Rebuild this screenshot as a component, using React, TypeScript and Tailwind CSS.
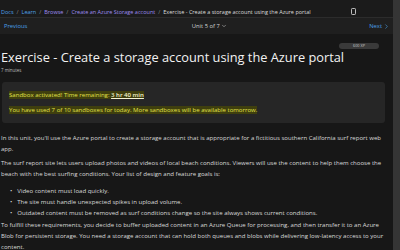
import { ChevronDown, ChevronRight } from "lucide-react"

const crumbs = [
  { label: "Docs", color: "text-[#4ea1e8]" },
  { label: "Learn", color: "text-[#4ea1e8]" },
  { label: "Browse", color: "text-[#9d8df1]" },
  { label: "Create an Azure Storage account", color: "text-[#9d8df1]" },
]

const goals = [
  "Video content must load quickly.",
  "The site must handle unexpected spikes in upload volume.",
  "Outdated content must be removed as surf conditions change so the site always shows current conditions.",
]

export default function App() {
  return (
    <div
      className="flex h-[250px] w-[400px] overflow-hidden bg-[#171717] text-[#e6e6e6]"
      style={{ fontFamily: '"Open Sans", "Noto Sans", sans-serif' }}
    >
      <div className="flex w-[393px] flex-col">
        {/* breadcrumb */}
        <div className="flex h-[18px] shrink-0 items-center justify-between border-b border-[#2c2c2c] bg-[#1b1b1b] pl-[1px] pr-[37px] pt-[7px] text-[5.5px]">
          <div className="flex items-center gap-[3px]">
            {crumbs.map((c) => (
              <span key={c.label} className="flex items-center gap-[3px]">
                <span className={c.color}>{c.label}</span>
                <span className="text-[#8a8a8a]">/</span>
              </span>
            ))}
            <span className="text-[#dcdcdc]">Exercise - Create a storage account using the Azure portal</span>
          </div>
          <svg width="5" height="7" viewBox="0 0 5 7" className="mt-[-1px]">
            <rect x="0.5" y="0.5" width="4" height="6" rx="0.8" fill="none" stroke="#d0d0d0" strokeWidth="0.9" />
          </svg>
        </div>

        {/* unit nav */}
        <div className="flex h-[16px] shrink-0 items-center justify-between bg-[#1f1f1f] pl-[4px] pr-[3px] text-[5.8px]">
          <span className="text-[#4aa0e6]">Previous</span>
          <span className="ml-[22px] flex items-center gap-[1px] text-[#d6d6d6]">
            Unit 5 of 7 <ChevronDown size={6} strokeWidth={2} />
          </span>
          <span className="flex items-center gap-[1px] text-[#4aa0e6]">
            Next <ChevronRight size={7} strokeWidth={2} />
          </span>
        </div>

        {/* article */}
        <div className="flex shrink-0 flex-col pl-[1px] pr-[8px] text-[6.05px] leading-[11px] text-[#dadada]">
          <div className="mt-[9px] flex justify-end pr-[6px]">
            <span className="rounded-full bg-[#3a3a3a] px-[14px] text-[3.8px] leading-[6px] text-[#c8c8c8]">600 XP</span>
          </div>
          <h1 className="mt-[-1px] text-[12.8px] font-medium leading-[18px] text-[#f2f2f2]">
            Exercise - Create a storage account using the Azure portal
          </h1>
          <p className="text-[4.4px] leading-[8px] text-[#bdbdbd]">7 minutes</p>

          <div className="ml-[1px] mt-[8px] flex h-[41px] flex-col justify-center gap-[5px] rounded-[3px] bg-[#262626] pl-[7px]">
            <p className="leading-[10px]">
              <span className="bg-[#3f3f0e] text-[#e2e24a]">
                Sandbox activated! Time remaining:{" "}
                <span className="font-semibold text-[#f4f4d0] underline">3 hr 40 min</span>
              </span>
            </p>
            <p className="leading-[10px]">
              <span className="bg-[#3f3f0e] text-[#e2e24a]">
                You have used 7 of 10 sandboxes for today. More sandboxes will be available tomorrow.
              </span>
            </p>
          </div>

          <p className="mt-[10px]">
            In this unit, you'll use the Azure portal to create a storage account that is appropriate for a fictitious southern
            California surf report web app.
          </p>
          <p className="mt-[3px]">
            The surf report site lets users upload photos and videos of local beach conditions. Viewers will use the content to
            help them choose the beach with the best surfing conditions. Your list of design and feature goals is:
          </p>
          <ul className="mt-[6px] flex flex-col">
            {goals.map((g) => (
              <li key={g} className="flex items-start gap-[5px] pl-[9px]">
                <span>•</span>
                <span>{g}</span>
              </li>
            ))}
          </ul>
          <p className="mt-[1px]">
            To fulfill these requirements, you decide to buffer uploaded content in an Azure Queue for processing, and then
            transfer it to an Azure Blob for persistent storage. You need a storage account that can hold both queues and blobs
            while delivering low-latency access to your
            <br />
            content.
          </p>
        </div>
      </div>
      <div className="w-[7px] bg-[#353535]" />
    </div>
  )
}
